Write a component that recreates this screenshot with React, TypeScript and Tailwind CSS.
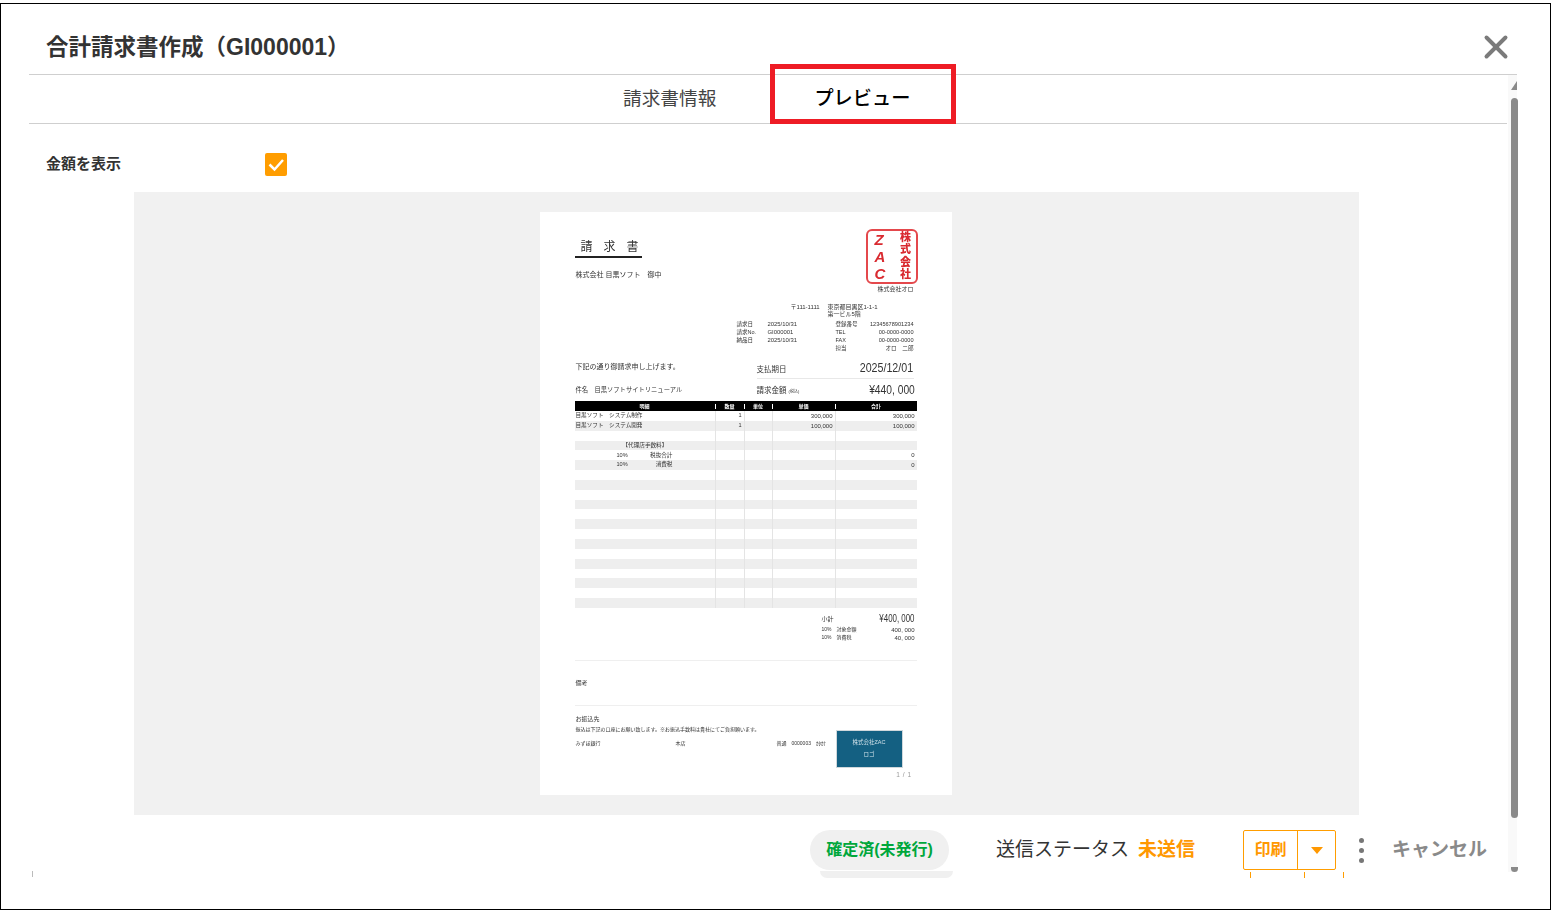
import { X } from "lucide-react";

const jp = "font-['Liberation_Sans','Noto_Sans_CJK_JP',sans-serif]";

const items: [string, string, string, string, string][] = [
  ["目黒ソフト　システム制作", "1", "", "300,000", "300,000"],
  ["目黒ソフト　システム開発", "1", "", "100,000", "100,000"],
  ["", "", "", "", ""],
  ["【代理店手数料】", "", "", "", ""],
  ["10%　　　　税抜合計", "", "", "", "0"],
  ["10%　　　　　消費税", "", "", "", "0"],
];

function InvoiceTable() {
  const rows = Array.from({ length: 20 }, (_, i) => items[i] ?? ["", "", "", "", ""]);
  return (
    <div className="text-[5.6px] leading-none text-[#333]">
      <div className="flex h-[10px] items-center bg-black text-center text-[5px] font-bold text-white">
        <div className="w-[141px] border-r border-white">明細</div>
        <div className="w-[29px] border-r border-white">数量</div>
        <div className="w-[28px] border-r border-white">単位</div>
        <div className="w-[63px] border-r border-white">単価</div>
        <div className="flex-1">合計</div>
      </div>
      {rows.map((r, i) => (
        <div key={i} className={`flex h-[9.85px] ${i % 2 === 1 ? "bg-[#eeeeee]" : "bg-white"}`}>
          <div className={`flex w-[141px] items-center whitespace-nowrap border-r border-[#e4e4e4] ${i === 3 ? "pl-[48px]" : i === 4 || i === 5 ? "pl-[42px]" : "pl-[1px]"}`}>{r[0]}</div>
          <div className="flex w-[29px] items-center justify-end border-r border-[#e4e4e4] pr-[2px]">{r[1]}</div>
          <div className="w-[28px] border-r border-[#e4e4e4]">{r[2]}</div>
          <div className="flex w-[63px] items-center justify-end border-r border-[#e4e4e4] pr-[2px] text-[6px]">{r[3]}</div>
          <div className="flex flex-1 items-center justify-end pr-[2px] text-[6px]">{r[4]}</div>
        </div>
      ))}
    </div>
  );
}

function Stamp() {
  return (
    <div className="absolute left-[326px] top-[17px] flex h-[55px] w-[52px] justify-between rounded-[6px] border-2 border-[#e4484c] pl-[7px] pr-[5px] text-[#d92a30]">
      <div className="flex flex-col justify-around font-['Liberation_Sans',sans-serif] text-[15px] font-bold italic leading-none">
        <span>Z</span>
        <span>A</span>
        <span>C</span>
      </div>
      <div className="flex items-center font-['Noto_Sans_CJK_JP',sans-serif] text-[11px] font-black leading-none tracking-[1.5px] [writing-mode:vertical-rl]">
        株式会社
      </div>
    </div>
  );
}

function Paper() {
  return (
    <div className={`relative h-[583px] w-[412px] bg-white px-[35px] pt-[25px] text-[6.5px] leading-none text-[#333] blur-[0.3px] ${jp}`}>
      <Stamp />
      <div className="flex h-[21px] w-[67px] items-center whitespace-nowrap border-b-2 border-[#222] pl-[6px] text-[12px] tracking-[11px]">請求書</div>
      <div className="mt-[11px] flex h-[10px] items-center pl-[1px] text-[7px]">株式会社 目黒ソフト　御中</div>
      <div className="mt-[5px] flex h-[10px] items-center justify-end pr-[3px] text-[6px]">株式会社オロ</div>
      <div className="mt-[9px] flex h-[7.5px] items-center pl-[216px] text-[6px]">
        <span className="w-[37px]">〒111-1111</span>
        <span>東京都目黒区1-1-1</span>
      </div>
      <div className="flex h-[7.5px] items-center pl-[253px] text-[6px]">第一ビル5階</div>
      <div className="mt-[3px] text-[5.5px]">
        {[
          ["請求日", "2025/10/31", "登録番号", "12345678901234"],
          ["請求No.", "GI000001", "TEL", "00-0000-0000"],
          ["納品日", "2025/10/31", "FAX", "00-0000-0000"],
          ["", "", "担当", "オロ　二郎"],
        ].map((r) => (
          <div key={r[2]} className="flex h-[8px] items-center pl-[162px] pr-[3px]">
            <span className="w-[31px]">{r[0]}</span>
            <span className="w-[68px] text-[5.9px]">{r[1]}</span>
            <span className="w-[30px]">{r[2]}</span>
            <span className="flex-1 text-right text-[5.6px]">{r[3]}</span>
          </div>
        ))}
      </div>
      <div className="mt-[5px] flex h-[21px]">
        <div className="w-[182px] pl-[1px] pt-[5px] text-[7px]">下記の通り御請求申し上げます。</div>
        <div className="mr-[3px] flex flex-1 items-center justify-between border-b border-[#e8e8e8] text-[7.5px]">
          <span className="mt-[3px]">支払期日</span>
          <span className="mb-[2px] inline-block origin-right scale-x-[0.82] text-[13px]">2025/12/01</span>
        </div>
      </div>
      <div className="flex h-[22px] items-center pb-[2px]">
        <div className="mt-[3px] w-[182px] pl-[1px] text-[6.3px]">件名　目黒ソフトサイトリニューアル</div>
        <div className="mr-[2px] flex flex-1 items-center justify-between text-[7.5px]">
          <span className="mt-[3px]">
            請求金額 <span className="text-[4px]">(税込)</span>
          </span>
          <span className="inline-block origin-right scale-x-[0.79] text-[13px]">¥440, 000</span>
        </div>
      </div>
      <InvoiceTable />
      <div className="ml-[247px] mr-[2px] mt-[4px] flex h-[14px] items-center justify-between text-[6px]">
        <span>小計</span>
        <span className="inline-block origin-right scale-x-[0.79] text-[10px]">¥400, 000</span>
      </div>
      <div className="ml-[247px] mr-[2px] flex h-[8px] items-center justify-between text-[5px]">
        <span>10%　対象金額</span>
        <span className="text-[6px]">400, 000</span>
      </div>
      <div className="ml-[247px] mr-[2px] flex h-[8px] items-center justify-between text-[5px]">
        <span>10%　消費税</span>
        <span className="text-[6px]">40, 000</span>
      </div>
      <div className="mt-[18px] flex h-[46px] items-center border-y border-[#efefef] pl-[1px] text-[6px]">備考</div>
      <div className="flex">
        <div className="w-[262px] pl-[1px]">
          <div className="mt-[8px] flex h-[10px] items-center text-[6px]">お振込先</div>
          <div className="mt-[2px] flex h-[8px] items-center whitespace-nowrap text-[5px]">振込は下記の口座にお願い致します。※お振込手数料は貴社にてご負担願います。</div>
          <div className="mt-[6px] flex h-[8px] items-center text-[5px]">
            <span className="w-[100px]">みずほ銀行</span>
            <span className="w-[101px]">本店</span>
            <span>普通　0000003　ｶﾀｶﾅ</span>
          </div>
        </div>
        <div className="flex-1 pt-[25px]">
          <div className="flex h-[36px] w-[65px] flex-col items-center justify-center gap-[6px] bg-[#146082] text-[5.5px] text-[#cfe0e8] shadow-[0_0_0_1px_#d0d8dc]">
            <span>株式会社ZAC</span>
            <span>ロゴ</span>
          </div>
          <div className="mt-[5px] pr-[5px] text-right text-[6.5px] tracking-[0.5px] text-[#999]">1 / 1</div>
        </div>
      </div>
    </div>
  );
}

export default function App() {
  return (
    <div className="h-[911px] w-[1554px] bg-white pt-[3px]">
      <div className={`relative flex h-[907px] w-[1551px] flex-col border border-black bg-white text-[#333] ${jp}`}>
        {/* title */}
        <div className="ml-[28px] mr-[33px] flex h-[71px] items-center justify-between border-b border-[#cfcfcf] pl-[17px] pt-[16px]">
          <h1 className="text-[22.5px] font-bold">
            合計請求書作成（<span className="text-[23px]">GI000001</span>）
          </h1>
          <X className="mr-[2px] h-[38px] w-[38px] text-[#7b7b7b]" strokeWidth={2.5} />
        </div>

        {/* tabs */}
        <div className="relative ml-[28px] mr-[43px] flex h-[49px] items-center border-b border-[#cfcfcf]">
          <div className="ml-[594px] text-[18.7px] text-[#444]">請求書情報</div>
          <div className="ml-[98px] text-[19.2px] font-medium text-black">プレビュー</div>
          {/* annotation box */}
          <div className="absolute left-[741px] top-[-11px] h-[60px] w-[186px] border-[5px] border-[#ee1c25]" />
        </div>

        {/* show amounts */}
        <div className="flex h-[68px] items-center pl-[45px] pt-[12px]">
          <div className="w-[219px] text-[15px] font-bold">金額を表示</div>
          <div className="flex h-[23px] w-[22px] items-center justify-center rounded-[2px] bg-[#ff9d00]">
            <svg viewBox="0 0 22 23" className="h-[23px] w-[22px]" fill="none" stroke="white" strokeWidth="2.5">
              <path d="M4.5 11.5 L9.5 16.5 L18 7" />
            </svg>
          </div>
        </div>

        {/* preview */}
        <div className="ml-[133px] flex h-[623px] w-[1225px] justify-center bg-[#f1f1f1] pr-[2px] pt-[20px]">
          <Paper />
        </div>

        {/* footer */}
        <div className="mt-[15px] flex h-[40px] items-center">
          <div className="ml-[809px] flex h-[40px] w-[139px] items-center justify-center rounded-[20px] bg-[#f0f0f0] text-[16px] font-bold text-[#00a73c]">確定済(未発行)</div>
          <div className="ml-[47px] text-[19px] text-[#333]">送信ステータス</div>
          <div className="ml-[9px] text-[19px] font-bold text-[#ff9800]">未送信</div>
          <div className="ml-[48px] flex h-[40px] w-[93px] rounded-[2px] border border-[#ff9d00]">
            <div className="flex w-[54px] items-center justify-center border-r border-[#ff9d00] text-[16px] font-bold text-[#ff9800]">印刷</div>
            <div className="flex flex-1 items-center justify-center">
              <div className="h-0 w-0 border-x-[6px] border-t-[7px] border-x-transparent border-t-[#ff9800]" />
            </div>
          </div>
          <div className="ml-[23px] flex flex-col gap-[5px]">
            <div className="h-[5px] w-[5px] rounded-full bg-[#777]" />
            <div className="h-[5px] w-[5px] rounded-full bg-[#777]" />
            <div className="h-[5px] w-[5px] rounded-full bg-[#777]" />
          </div>
          <div className="ml-[28px] text-[19px] font-bold text-[#8a8a8a]">キャンセル</div>
        </div>

        {/* scrollbar */}
        <div className="absolute left-[1507px] top-[71px] h-[797px] w-[9px] bg-[#f9f9f9]">
          <div className="absolute left-[3px] top-[6px] h-0 w-0 border-b-[9px] border-l-[6px] border-b-[#8a8a8a] border-l-transparent" />
          <div className="absolute left-[3px] top-[23px] h-[720px] w-[7px] rounded-[4px] bg-[#8a8a8a]" />
          <div className="absolute bottom-0 left-[3px] h-[5px] w-[7px] rounded-b-[4px] bg-[#8a8a8a]" />
        </div>

        {/* clipped remains under the footer */}
        <div className="absolute left-[31px] top-[867px] h-[6px] w-px bg-[#bbb]" />
        <div className="absolute left-[819px] top-[867px] h-[7px] w-[133px] rounded-b-[8px] bg-[#f0f0f0]" />
        <div className="absolute left-[1249px] top-[868px] h-[6px] w-px bg-[#ff9d00]" />
        <div className="absolute left-[1303px] top-[868px] h-[6px] w-px bg-[#ff9d00]" />
        <div className="absolute left-[1342px] top-[868px] h-[6px] w-px bg-[#ff9d00]" />
      </div>
    </div>
  );
}
